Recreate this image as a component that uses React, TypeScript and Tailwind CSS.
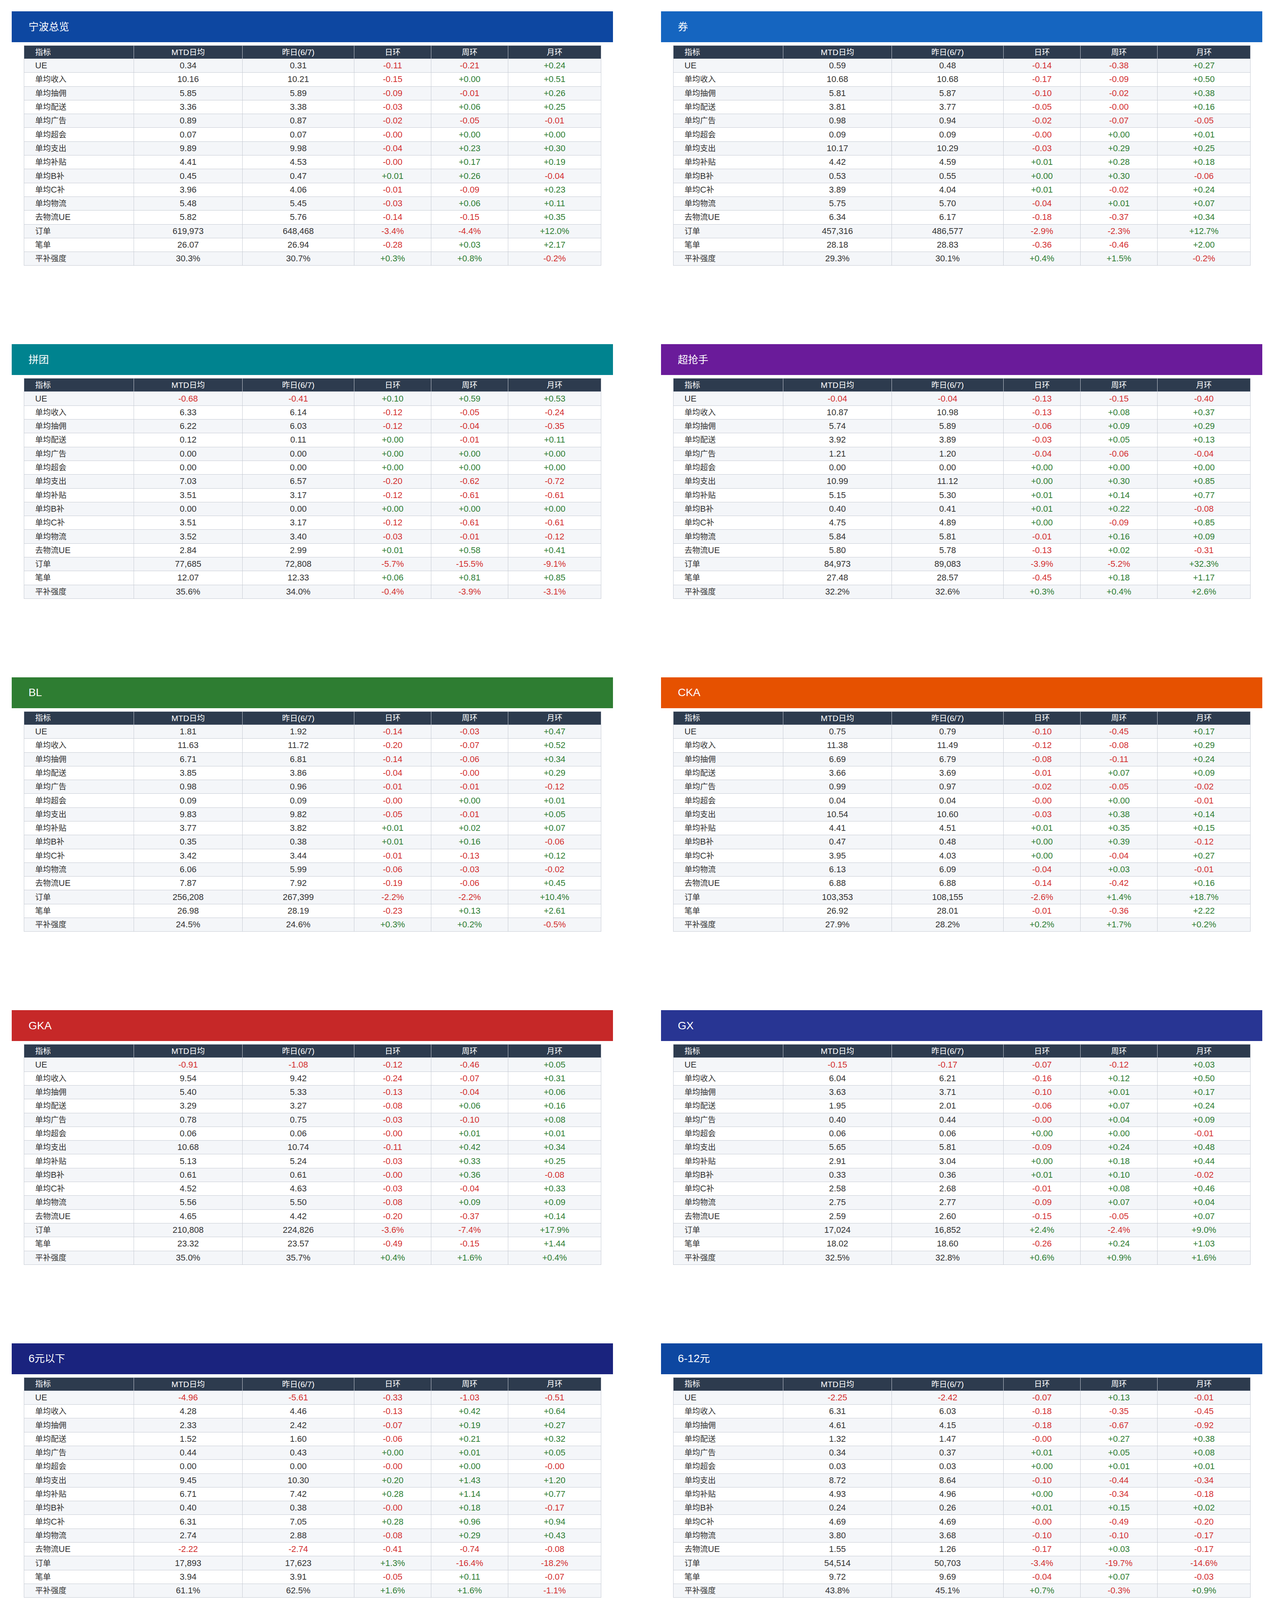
import React from "react";

// 指标 labels shared by every table
const LABELS = [
  "UE",
  "单均收入",
  "单均抽佣",
  "单均配送",
  "单均广告",
  "单均超会",
  "单均支出",
  "单均补贴",
  "单均B补",
  "单均C补",
  "单均物流",
  "去物流UE",
  "订单",
  "笔单",
  "平补强度",
];

interface Section {
  title: string;
  headerClass: string;
  rows: string; // rows split by "|", values split by space
}

const SECTIONS: Section[] = [
  {
    title: "宁波总览",
    headerClass: "bg-[#0d47a1]",
    rows: "0.34 0.31 -0.11 -0.21 +0.24|10.16 10.21 -0.15 +0.00 +0.51|5.85 5.89 -0.09 -0.01 +0.26|3.36 3.38 -0.03 +0.06 +0.25|0.89 0.87 -0.02 -0.05 -0.01|0.07 0.07 -0.00 +0.00 +0.00|9.89 9.98 -0.04 +0.23 +0.30|4.41 4.53 -0.00 +0.17 +0.19|0.45 0.47 +0.01 +0.26 -0.04|3.96 4.06 -0.01 -0.09 +0.23|5.48 5.45 -0.03 +0.06 +0.11|5.82 5.76 -0.14 -0.15 +0.35|619,973 648,468 -3.4% -4.4% +12.0%|26.07 26.94 -0.28 +0.03 +2.17|30.3% 30.7% +0.3% +0.8% -0.2%",
  },
  {
    title: "券",
    headerClass: "bg-[#1565c0]",
    rows: "0.59 0.48 -0.14 -0.38 +0.27|10.68 10.68 -0.17 -0.09 +0.50|5.81 5.87 -0.10 -0.02 +0.38|3.81 3.77 -0.05 -0.00 +0.16|0.98 0.94 -0.02 -0.07 -0.05|0.09 0.09 -0.00 +0.00 +0.01|10.17 10.29 -0.03 +0.29 +0.25|4.42 4.59 +0.01 +0.28 +0.18|0.53 0.55 +0.00 +0.30 -0.06|3.89 4.04 +0.01 -0.02 +0.24|5.75 5.70 -0.04 +0.01 +0.07|6.34 6.17 -0.18 -0.37 +0.34|457,316 486,577 -2.9% -2.3% +12.7%|28.18 28.83 -0.36 -0.46 +2.00|29.3% 30.1% +0.4% +1.5% -0.2%",
  },
  {
    title: "拼团",
    headerClass: "bg-[#00838f]",
    rows: "-0.68 -0.41 +0.10 +0.59 +0.53|6.33 6.14 -0.12 -0.05 -0.24|6.22 6.03 -0.12 -0.04 -0.35|0.12 0.11 +0.00 -0.01 +0.11|0.00 0.00 +0.00 +0.00 +0.00|0.00 0.00 +0.00 +0.00 +0.00|7.03 6.57 -0.20 -0.62 -0.72|3.51 3.17 -0.12 -0.61 -0.61|0.00 0.00 +0.00 +0.00 +0.00|3.51 3.17 -0.12 -0.61 -0.61|3.52 3.40 -0.03 -0.01 -0.12|2.84 2.99 +0.01 +0.58 +0.41|77,685 72,808 -5.7% -15.5% -9.1%|12.07 12.33 +0.06 +0.81 +0.85|35.6% 34.0% -0.4% -3.9% -3.1%",
  },
  {
    title: "超抢手",
    headerClass: "bg-[#6a1b9a]",
    rows: "-0.04 -0.04 -0.13 -0.15 -0.40|10.87 10.98 -0.13 +0.08 +0.37|5.74 5.89 -0.06 +0.09 +0.29|3.92 3.89 -0.03 +0.05 +0.13|1.21 1.20 -0.04 -0.06 -0.04|0.00 0.00 +0.00 +0.00 +0.00|10.99 11.12 +0.00 +0.30 +0.85|5.15 5.30 +0.01 +0.14 +0.77|0.40 0.41 +0.01 +0.22 -0.08|4.75 4.89 +0.00 -0.09 +0.85|5.84 5.81 -0.01 +0.16 +0.09|5.80 5.78 -0.13 +0.02 -0.31|84,973 89,083 -3.9% -5.2% +32.3%|27.48 28.57 -0.45 +0.18 +1.17|32.2% 32.6% +0.3% +0.4% +2.6%",
  },
  {
    title: "BL",
    headerClass: "bg-[#2e7d32]",
    rows: "1.81 1.92 -0.14 -0.03 +0.47|11.63 11.72 -0.20 -0.07 +0.52|6.71 6.81 -0.14 -0.06 +0.34|3.85 3.86 -0.04 -0.00 +0.29|0.98 0.96 -0.01 -0.01 -0.12|0.09 0.09 -0.00 +0.00 +0.01|9.83 9.82 -0.05 -0.01 +0.05|3.77 3.82 +0.01 +0.02 +0.07|0.35 0.38 +0.01 +0.16 -0.06|3.42 3.44 -0.01 -0.13 +0.12|6.06 5.99 -0.06 -0.03 -0.02|7.87 7.92 -0.19 -0.06 +0.45|256,208 267,399 -2.2% -2.2% +10.4%|26.98 28.19 -0.23 +0.13 +2.61|24.5% 24.6% +0.3% +0.2% -0.5%",
  },
  {
    title: "CKA",
    headerClass: "bg-[#e65100]",
    rows: "0.75 0.79 -0.10 -0.45 +0.17|11.38 11.49 -0.12 -0.08 +0.29|6.69 6.79 -0.08 -0.11 +0.24|3.66 3.69 -0.01 +0.07 +0.09|0.99 0.97 -0.02 -0.05 -0.02|0.04 0.04 -0.00 +0.00 -0.01|10.54 10.60 -0.03 +0.38 +0.14|4.41 4.51 +0.01 +0.35 +0.15|0.47 0.48 +0.00 +0.39 -0.12|3.95 4.03 +0.00 -0.04 +0.27|6.13 6.09 -0.04 +0.03 -0.01|6.88 6.88 -0.14 -0.42 +0.16|103,353 108,155 -2.6% +1.4% +18.7%|26.92 28.01 -0.01 -0.36 +2.22|27.9% 28.2% +0.2% +1.7% +0.2%",
  },
  {
    title: "GKA",
    headerClass: "bg-[#c62828]",
    rows: "-0.91 -1.08 -0.12 -0.46 +0.05|9.54 9.42 -0.24 -0.07 +0.31|5.40 5.33 -0.13 -0.04 +0.06|3.29 3.27 -0.08 +0.06 +0.16|0.78 0.75 -0.03 -0.10 +0.08|0.06 0.06 -0.00 +0.01 +0.01|10.68 10.74 -0.11 +0.42 +0.34|5.13 5.24 -0.03 +0.33 +0.25|0.61 0.61 -0.00 +0.36 -0.08|4.52 4.63 -0.03 -0.04 +0.33|5.56 5.50 -0.08 +0.09 +0.09|4.65 4.42 -0.20 -0.37 +0.14|210,808 224,826 -3.6% -7.4% +17.9%|23.32 23.57 -0.49 -0.15 +1.44|35.0% 35.7% +0.4% +1.6% +0.4%",
  },
  {
    title: "GX",
    headerClass: "bg-[#283593]",
    rows: "-0.15 -0.17 -0.07 -0.12 +0.03|6.04 6.21 -0.16 +0.12 +0.50|3.63 3.71 -0.10 +0.01 +0.17|1.95 2.01 -0.06 +0.07 +0.24|0.40 0.44 -0.00 +0.04 +0.09|0.06 0.06 +0.00 +0.00 -0.01|5.65 5.81 -0.09 +0.24 +0.48|2.91 3.04 +0.00 +0.18 +0.44|0.33 0.36 +0.01 +0.10 -0.02|2.58 2.68 -0.01 +0.08 +0.46|2.75 2.77 -0.09 +0.07 +0.04|2.59 2.60 -0.15 -0.05 +0.07|17,024 16,852 +2.4% -2.4% +9.0%|18.02 18.60 -0.26 +0.24 +1.03|32.5% 32.8% +0.6% +0.9% +1.6%",
  },
  {
    title: "6元以下",
    headerClass: "bg-[#1a237e]",
    rows: "-4.96 -5.61 -0.33 -1.03 -0.51|4.28 4.46 -0.13 +0.42 +0.64|2.33 2.42 -0.07 +0.19 +0.27|1.52 1.60 -0.06 +0.21 +0.32|0.44 0.43 +0.00 +0.01 +0.05|0.00 0.00 -0.00 +0.00 -0.00|9.45 10.30 +0.20 +1.43 +1.20|6.71 7.42 +0.28 +1.14 +0.77|0.40 0.38 -0.00 +0.18 -0.17|6.31 7.05 +0.28 +0.96 +0.94|2.74 2.88 -0.08 +0.29 +0.43|-2.22 -2.74 -0.41 -0.74 -0.08|17,893 17,623 +1.3% -16.4% -18.2%|3.94 3.91 -0.05 +0.11 -0.07|61.1% 62.5% +1.6% +1.6% -1.1%",
  },
  {
    title: "6-12元",
    headerClass: "bg-[#0d47a1]",
    rows: "-2.25 -2.42 -0.07 +0.13 -0.01|6.31 6.03 -0.18 -0.35 -0.45|4.61 4.15 -0.18 -0.67 -0.92|1.32 1.47 -0.00 +0.27 +0.38|0.34 0.37 +0.01 +0.05 +0.08|0.03 0.03 +0.00 +0.01 +0.01|8.72 8.64 -0.10 -0.44 -0.34|4.93 4.96 +0.00 -0.34 -0.18|0.24 0.26 +0.01 +0.15 +0.02|4.69 4.69 -0.00 -0.49 -0.20|3.80 3.68 -0.10 -0.10 -0.17|1.55 1.26 -0.17 +0.03 -0.17|54,514 50,703 -3.4% -19.7% -14.6%|9.72 9.69 -0.04 +0.07 -0.03|43.8% 45.1% +0.7% -0.3% +0.9%",
  },
  {
    title: "12-15元",
    headerClass: "bg-[#01579b]",
    rows: "-0.83 -0.83 -0.01 +0.04 +0.26|8.00 7.90 -0.03 -0.12 +0.18|5.31 5.25 -0.06 -0.01 +0.18|2.12 2.09 +0.02 -0.06 +0.02|0.50 0.47 +0.00 -0.06 -0.04|0.08 0.08 +0.01 +0.01 +0.02|8.88 8.78 -0.01 -0.13 +0.01|3.82 3.79 -0.01 -0.09 -0.05|0.29 0.29 +0.01 +0.16 -0.04|3.53 3.50 -0.02 -0.26 -0.01|5.06 4.98 +0.00 -0.04 +0.06|4.44 4.36 -0.01 -0.00 +0.32|70,718 70,424 -4.6% +1.9% -6.0%|13.76 13.77 +0.01 +0.01 -0.02|32.3% 32.4% +0.0% -0.2% -0.8%",
  },
  {
    title: "15-20元",
    headerClass: "bg-[#006064]",
    rows: "0.07 -0.02 -0.08 -0.19 +0.13|8.80 8.74 -0.13 +0.05 +0.10|4.47 4.48 -0.06 +0.07 +0.08|3.39 3.36 -0.05 +0.04 +0.07|0.84 0.79 -0.02 -0.07 -0.06|0.10 0.10 -0.00 +0.01 +0.01|9.00 9.04 -0.05 +0.31 +0.11|3.36 3.43 +0.00 +0.17 +0.05|0.40 0.42 +0.01 +0.23 -0.08|2.95 3.01 -0.01 -0.06 +0.13|5.64 5.61 -0.05 +0.14 +0.06|5.71 5.59 -0.13 -0.05 +0.19|147,220 148,717 -3.3% -1.4% +10.1%|17.60 17.63 +0.00 +0.00 +0.03|27.6% 28.2% +0.3% +0.9% +0.1%",
  },
  {
    title: "20-25元",
    headerClass: "bg-[#004d40]",
    rows: "0.42 0.33 -0.09 -0.28 -0.02|10.18 10.10 -0.11 -0.02 +0.22|5.01 5.01 -0.04 +0.04 +0.14|4.11 4.08 -0.05 +0.00 +0.16|0.99 0.95 -0.02 -0.06 -0.09|0.06 0.06 -0.00 -0.00 -0.01|9.96 9.99 -0.02 +0.32 +0.36|3.80 3.87 +0.01 +0.24 +0.23|0.50 0.52 +0.02 +0.29 -0.09|3.30 3.36 -0.01 -0.05 +0.32|6.16 6.12 -0.03 +0.09 +0.13|6.58 6.45 -0.12 -0.19 +0.10|112,960 117,824 -2.9% -1.7% +16.7%|22.51 22.52 +0.01 +0.01 +0.00|27.2% 27.7% +0.3% +1.3% +0.8%",
  },
  {
    title: "25-30元",
    headerClass: "bg-[#1b5e20]",
    rows: "0.70 0.62 -0.09 -0.31 -0.16|11.01 10.95 -0.05 +0.01 +0.29|5.73 5.74 -0.01 +0.07 +0.18|4.20 4.17 -0.03 -0.01 +0.20|1.01 0.98 -0.02 -0.06 -0.09|0.06 0.06 +0.00 +0.00 -0.00|10.44 10.51 +0.04 +0.34 +0.51|4.35 4.42 +0.03 +0.29 +0.36|0.52 0.55 +0.00 +0.31 -0.06|3.83 3.87 +0.03 -0.02 +0.42|6.09 6.08 +0.01 +0.05 +0.16|6.79 6.70 -0.08 -0.26 -0.00|70,817 75,704 -2.9% -4.2% +17.1%|27.36 27.37 -0.00 +0.02 +0.02|28.3% 28.8% +0.2% +1.4% +1.2%",
  },
  {
    title: "大于30元",
    headerClass: "bg-[#33691e]",
    rows: "2.48 2.28 -0.15 -0.46 -0.12|14.33 14.11 -0.24 -0.12 +0.07|9.10 8.99 -0.16 -0.01 +0.13|3.93 3.85 -0.03 -0.03 +0.04|1.24 1.21 -0.04 -0.08 -0.09|0.06 0.06 -0.01 -0.01 -0.00|11.44 11.46 -0.09 +0.27 +0.07|5.78 5.89 -0.06 +0.37 +0.26|0.58 0.60 -0.00 +0.33 -0.05|5.20 5.28 -0.06 +0.04 +0.30|5.66 5.57 -0.02 -0.10 -0.19|8.14 7.86 -0.17 -0.56 -0.30|145,849 167,473 -3.9% -4.3% +36.6%|51.55 51.32 -0.89 -0.61 +0.49|28.8% 29.4% +0.1% +1.5% +0.8%",
  },
];

const HEADERS = ["指标", "MTD日均", "昨日(6/7)", "日环", "周环", "月环"];

// Latin glyphs in the reference run larger than the CJK ones, so ASCII runs get their own size
const Mixed: React.FC<{ text: string; latin: string }> = ({ text, latin }) => (
  <>
    {text.split(/([\x20-\x7e]+)/).map((part, i) =>
      part === "" ? null : /^[\x20-\x7e]+$/.test(part) ? (
        <span key={i} className={latin}>
          {part}
        </span>
      ) : (
        <span key={i}>{part}</span>
      )
    )}
  </>
);

// colour for a value cell: base columns only go red when negative, change columns red/green by sign
function valueClass(v: string, col: number) {
  if (v.startsWith("-")) return "text-[#d32f2f]";
  if (col >= 2 && v.startsWith("+")) return "text-[#2e7d32]";
  return "text-[#333333]";
}

const MetricTable: React.FC<{ rows: string }> = ({ rows }) => {
  const data = rows.split("|").map((r) => r.split(" "));
  return (
    <table className="mx-[31px] mt-[8px] w-[1477px] table-fixed border-collapse border border-[#c5cad3] text-[20px]">
      <colgroup>
        <col className="w-[281px]" />
        <col className="w-[278px]" />
        <col className="w-[286px]" />
        <col className="w-[197px]" />
        <col className="w-[197px]" />
        <col className="w-[238px]" />
      </colgroup>
      <thead>
        <tr className="h-[34px] bg-[#2d3b4e] text-white">
          {HEADERS.map((h, i) => (
            <th
              key={h}
              className={`border border-[#c5cad3] p-0 font-normal ${i === 0 ? "pl-[28px] text-left" : "text-center"}`}
            >
              <Mixed text={h} latin="text-[21px]" />
            </th>
          ))}
        </tr>
      </thead>
      <tbody>
        {LABELS.map((label, r) => (
          <tr key={label} className={`h-[35.3px] ${r % 2 === 0 ? "bg-[#f4f6f9]" : "bg-white"}`}>
            <td className="border border-[#c5cad3] p-0 pl-[28px] text-left text-[#333333]">
              <Mixed text={label} latin="text-[22px]" />
            </td>
            {data[r].map((v, c) => (
              <td key={c} className={`border border-[#c5cad3] p-0 text-center text-[22px] ${valueClass(v, c)}`}>
                {v}
              </td>
            ))}
          </tr>
        ))}
      </tbody>
    </table>
  );
};

const SectionCard: React.FC<{ section: Section }> = ({ section }) => (
  <div className="w-[1539px]">
    <div className={`flex h-[79px] items-center pl-[43px] text-[26px] text-white ${section.headerClass}`}>
      <Mixed text={section.title} latin="text-[28px]" />
    </div>
    <MetricTable rows={section.rows} />
  </div>
);

export default function App() {
  return (
    <div
      className="w-full bg-white px-[30px] pt-[29px] pb-[28px] leading-none"
      style={{ fontFamily: '"Liberation Sans", "Noto Sans CJK SC", sans-serif' }}
    >
      <div className="grid grid-cols-[1539px_1539px] gap-x-[123px] gap-y-[201px]">
        {SECTIONS.map((s) => (
          <SectionCard key={s.title} section={s} />
        ))}
      </div>
    </div>
  );
}
